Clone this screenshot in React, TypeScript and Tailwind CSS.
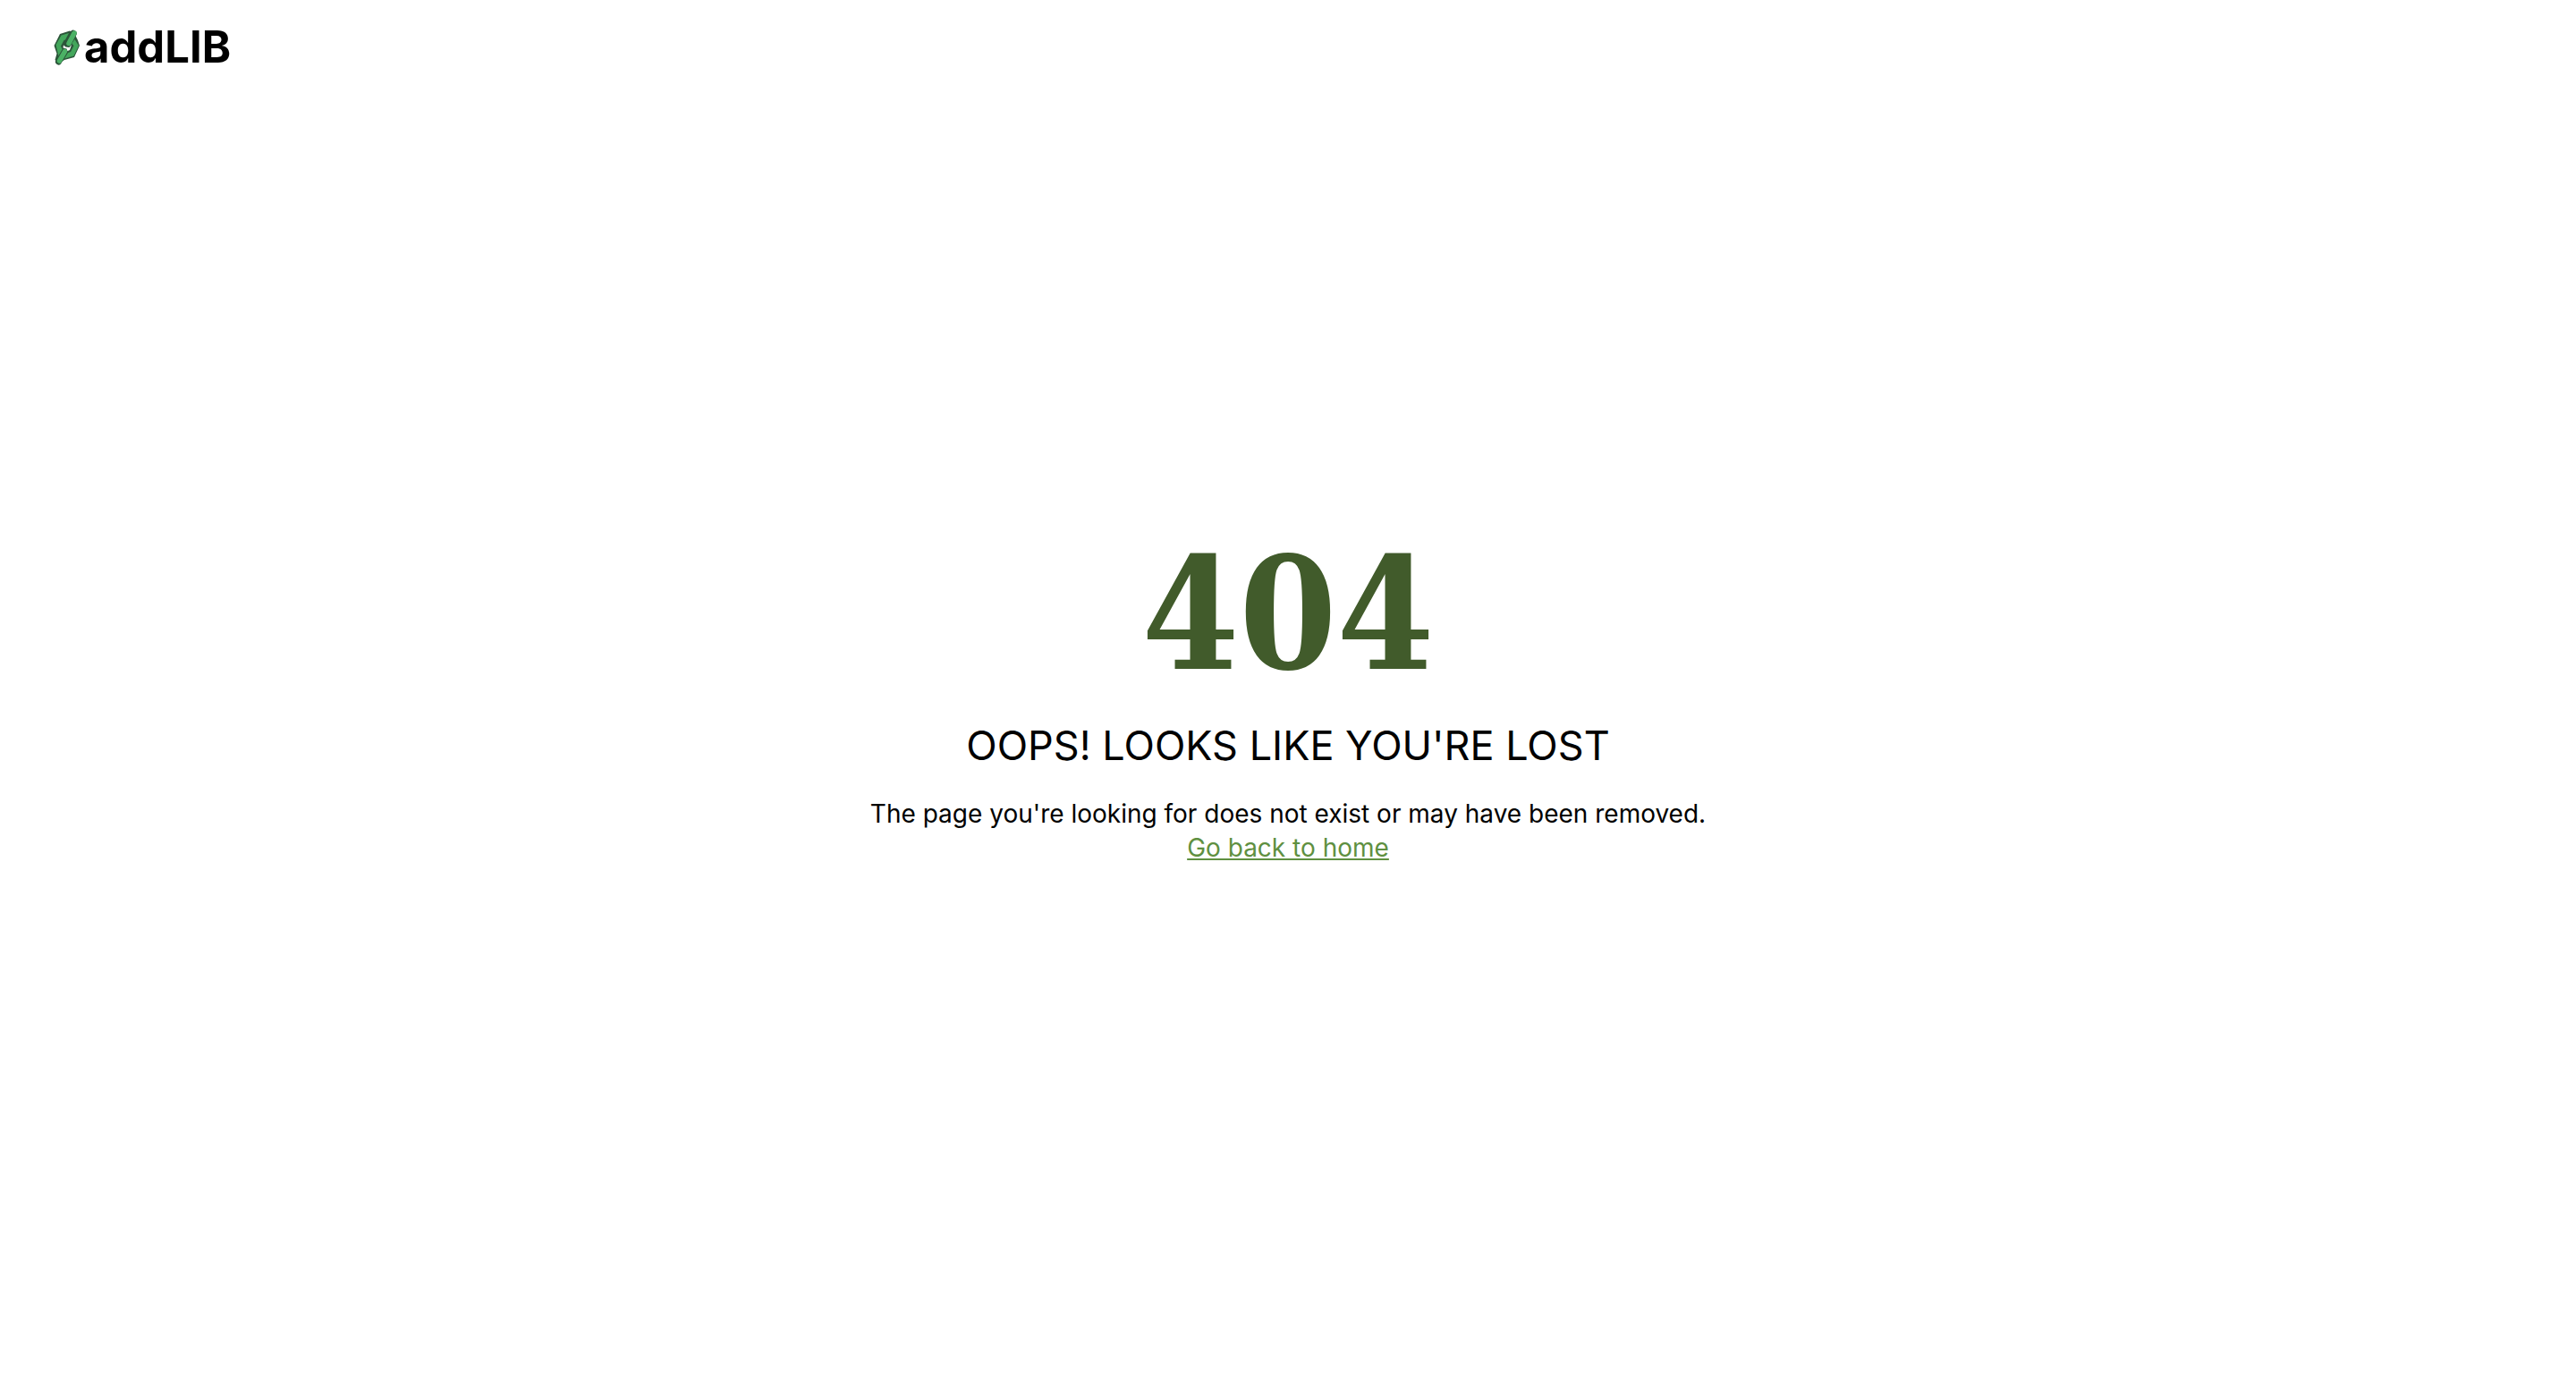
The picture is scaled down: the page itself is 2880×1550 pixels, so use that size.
function ChainMark() {
  return (
    <svg viewBox="0 0 30 40" className="h-10 w-[30px]" aria-hidden="true">
      <path d="M0.500 18 L7 5 L18 1.500 L23 4 L27 12 L29 18 L23 31 L12 34 L6 38 L1.500 34 L3.500 27Z" fill="#2c553a" />
      <path d="M2.500 17 L8.500 6.500 L17 4 L13 11.500 L11.500 12 L8 18.500 L10 23 L5.500 30Z" fill="#43a65b" />
      <path d="M23.500 11 L28 18 L22.500 29.500 L12 32.500 L16 26 L19 25 L22.500 18 L20 15.500Z" fill="#43a65b" />
      <path d="M22 4.500 L16 16" stroke="#2c553a" strokeWidth="7.500" strokeLinecap="round" />
      <path d="M23 4 L17 15.500" stroke="#4bb165" strokeWidth="5.500" strokeLinecap="round" />
      <path d="M12 25 L5.500 36" stroke="#2c553a" strokeWidth="7" strokeLinecap="round" />
      <path d="M12.500 24.500 L6.500 35" stroke="#4bb165" strokeWidth="5.500" strokeLinecap="round" />
      <path d="M11 17.500 L13.500 19.500 L17.500 20 L20 17 L18 23 L15.500 24 L14.500 21.500 L10.500 20.500Z" fill="#ffffff" />
    </svg>
  );
}

export default function App() {
  return (
    <div className="flex min-h-screen flex-col bg-white font-['Inter',sans-serif] text-black">
      <header className="flex h-[106px] items-center px-[60px]">
        <a href="/" className="flex items-center gap-1">
          <ChainMark />
          <span className="text-[49px] leading-[48px] font-bold">addLIB</span>
        </a>
      </header>
      <main className="flex flex-1 flex-col items-center justify-center pb-30 text-center">
        <h1 className="font-['DejaVu_Serif_Condensed','DejaVu_Serif',serif] text-[174px] leading-[236px] font-bold text-[#415b2b]">404</h1>
        <h2 className="text-[45px] leading-[58px]">OOPS! LOOKS LIKE YOU'RE LOST</h2>
        <p className="mt-7 text-[28px] leading-[38px]">
          The page you're looking for does not exist or may have been removed.
        </p>
        <a href="/" className="text-[28px] leading-[38px] text-[#5f9041] underline">
          Go back to home
        </a>
      </main>
    </div>
  );
}
